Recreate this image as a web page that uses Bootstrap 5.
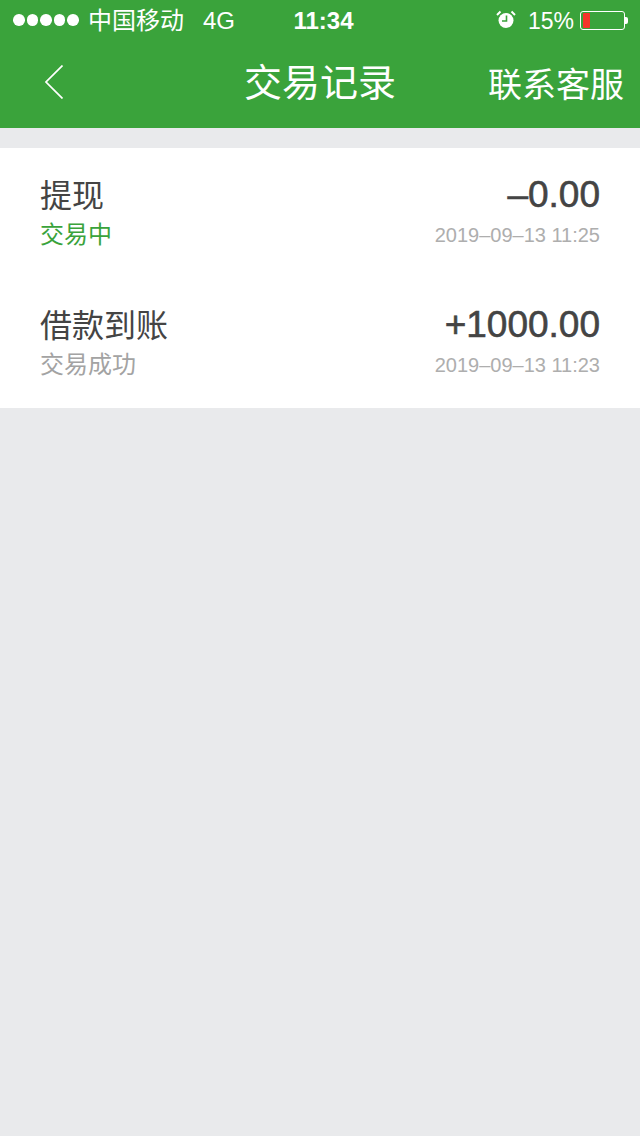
<!DOCTYPE html>
<html lang="zh-CN">
<head>
  <title>交易记录</title>
  <meta charset="UTF-8" />
  <meta name="viewport" content="width=device-width, initial-scale=1.0" />
  <link href="https://cdn.jsdelivr.net/npm/bootstrap@5.3.7/dist/css/bootstrap.min.css" rel="stylesheet">
  <style>
    body {
      background: #e9eaec;
      font-family: "Liberation Sans", "Noto Sans CJK SC", sans-serif;
      min-height: 1136px;
    }
    .top-head { background: #3aa33b; height: 128px; color: #fff; }
    .status-row { height: 40px; padding: 2px 12px 0 13px; font-size: 23px; position: relative; }
    .sig-dots { gap: 2px; margin-right: 9px; margin-top: -2px; }
    .sig-dot { width: 11.600px; height: 11.600px; border-radius: 50%; background: #fff; }
    .carrier { font-size: 24px; margin-right: 19px; }
    .net-type { font-size: 24px; }
    .clock { position: absolute; left: 0; right: 0; top: 1px; line-height: 40px; text-align: center; font-weight: 700; font-size: 24px; padding-left: 7px; }
    .alarm-icon { margin-right: 12px; margin-top: -3px; }
    .batt { width: 45px; height: 19px; border: 1px solid #fff; border-radius: 3px; padding: 1px 2px; margin-left: 6px; margin-top: -2px; }
    .batt-fill { width: 7px; height: 100%; background: #f5352b; border-radius: 1px; }
    .batt-tip { width: 3px; height: 7px; background: #fff; border-radius: 0 2px 2px 0; margin-top: -2px; }
    .title-row { height: 88px; padding-bottom: 2px; }
    .title-back { width: 160px; padding-left: 45px; margin-top: -3px; }
    .title-text { font-size: 38px; line-height: 1; }
    .title-link { width: 160px; font-size: 34px; line-height: 1; white-space: nowrap; padding-right: 16px; text-align: right; margin-top: 3px; }
    .trade-list { margin-top: 20px; background: #fff; height: 260px; }
    .trade-row { height: 130px; padding: 27px 40px 0; }
    .trade-name { font-size: 32px; line-height: 42px; color: #444; }
    .trade-state { font-size: 24px; line-height: 40px; margin-top: -2px; }
    .state-wait { color: #3aa33b; }
    .state-done { color: #a3a3a3; }
    .trade-amt { font-size: 37px; line-height: 40px; color: #444; text-align: right; -webkit-text-stroke: 0.6px #444; }
    .trade-time { font-size: 20px; line-height: 40px; color: #aeaeae; text-align: right; }
  </style>
</head>
<body>
  <header class="top-head">
    <div class="status-row d-flex align-items-center">
      <div class="sig-dots d-flex">
        <span class="sig-dot"></span><span class="sig-dot"></span><span class="sig-dot"></span><span class="sig-dot"></span><span class="sig-dot"></span>
      </div>
      <span class="carrier">中国移动</span>
      <span class="net-type">4G</span>
      <div class="clock">11:34</div>
      <svg class="alarm-icon ms-auto" width="20" height="20" viewBox="0 0 20 20">
        <circle cx="10" cy="10.500" r="7.500" fill="#fff"/>
        <path d="M10.500 5.500v5.500H6" fill="none" stroke="#3aa33b" stroke-width="1.600"/>
        <path d="M1 5 4.500 1.500M19 5 15.500 1.500" stroke="#fff" stroke-width="2" fill="none"/>
      </svg>
      <span>15%</span>
      <div class="batt"><div class="batt-fill"></div></div>
      <div class="batt-tip"></div>
    </div>
    <div class="title-row d-flex align-items-center justify-content-between">
      <div class="title-back">
        <svg class="d-block" width="18" height="34" viewBox="0 0 18 34">
          <path d="M17.500 .5 1 17l16.500 16.500" fill="none" stroke="#fff" stroke-width="1.700"/>
        </svg>
      </div>
      <div class="title-text">交易记录</div>
      <div class="title-link">联系客服</div>
    </div>
  </header>

  <main class="trade-list">
    <div class="trade-row d-flex justify-content-between">
      <div>
        <div class="trade-name">提现</div>
        <div class="trade-state state-wait">交易中</div>
      </div>
      <div>
        <div class="trade-amt">–0.00</div>
        <div class="trade-time">2019–09–13 11:25</div>
      </div>
    </div>
    <div class="trade-row d-flex justify-content-between">
      <div>
        <div class="trade-name">借款到账</div>
        <div class="trade-state state-done">交易成功</div>
      </div>
      <div>
        <div class="trade-amt">+1000.00</div>
        <div class="trade-time">2019–09–13 11:23</div>
      </div>
    </div>
  </main>

  <script src="https://cdn.jsdelivr.net/npm/bootstrap@5.3.7/dist/js/bootstrap.bundle.min.js"></script>
</body>
</html>
